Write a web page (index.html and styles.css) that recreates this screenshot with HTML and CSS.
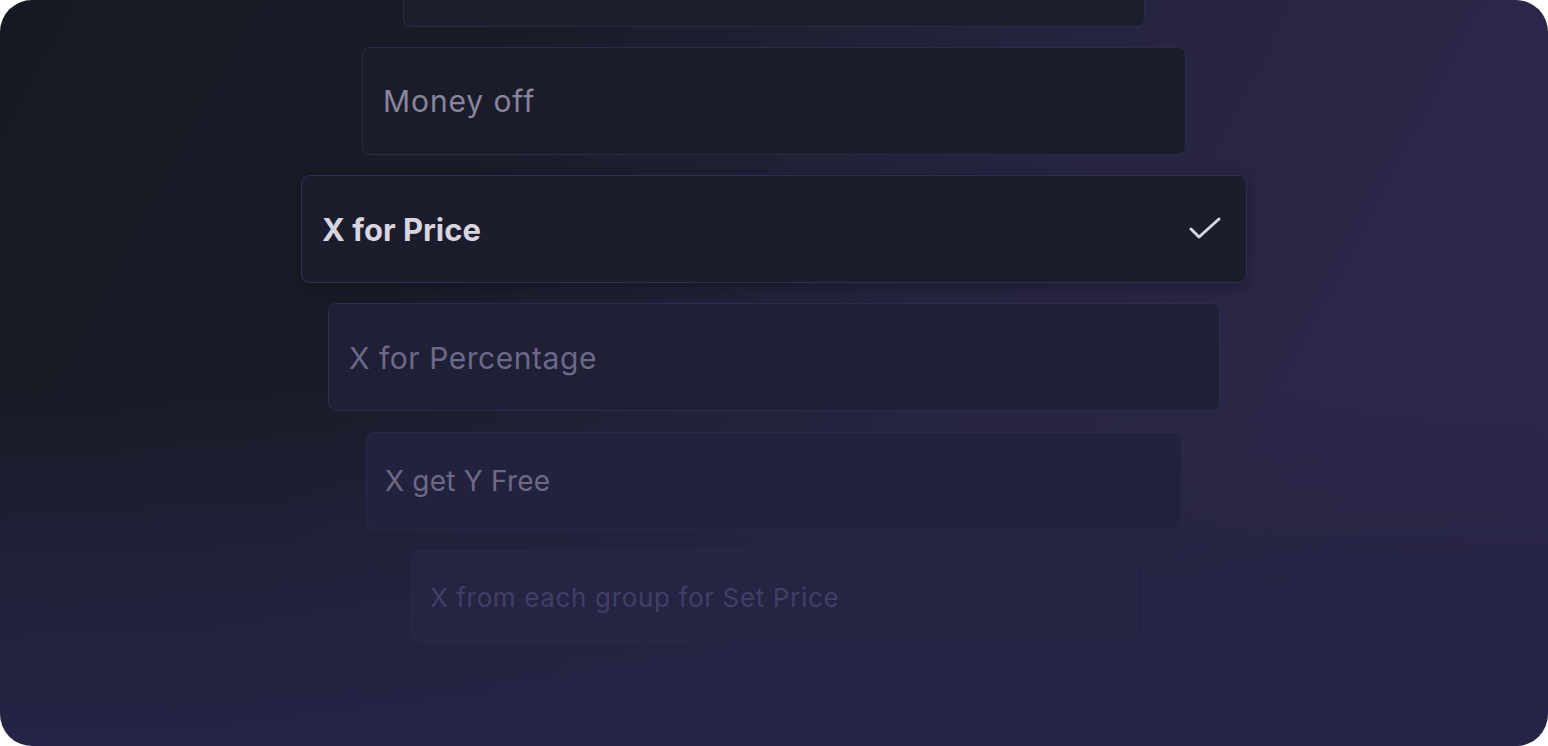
FILE: index.html
```html
<!DOCTYPE html>
<html lang="en">
<head>
<meta charset="utf-8">
<title>Promotion types</title>
<link rel="stylesheet" href="styles.css">
</head>
<body>
<main class="stage">
  <div class="list">
    <div class="option option--ghost-top"></div>
    <div class="option option--money"><span class="label">Money off</span></div>
    <div class="option option--selected">
      <span class="label">X for Price</span>
      <svg class="check" width="32" height="24" viewBox="0 0 32 24" aria-hidden="true">
        <path d="M2 12 L10 20 L30 2" fill="none" stroke="#d8d6e2" stroke-width="3" stroke-linecap="round" stroke-linejoin="round"/>
      </svg>
    </div>
    <div class="option option--percent"><span class="label">X for Percentage</span></div>
    <div class="option option--free"><span class="label">X get Y Free</span></div>
    <div class="option option--group"><span class="label">X from each group for Set Price</span></div>
  </div>
</main>
</body>
</html>
```

FILE: styles.css
```css
html, body {
  margin: 0;
  padding: 0;
  background: #ffffff;
}

.stage {
  width: 1548px;
  height: 746px;
  border-radius: 32px;
  overflow: hidden;
  background:
    linear-gradient(to bottom, rgba(37, 36, 70, 0) 52%, rgba(36, 35, 66, 0.75) 78%, rgba(37, 36, 70, 0.95) 100%),
    linear-gradient(118deg, #171922 0%, #1a1b28 28%, #25243f 55%, #2c2748 78%, #2d284b 100%);
  font-family: "Inter", "Open Sans", sans-serif;
}

.list {
  display: flex;
  flex-direction: column;
  align-items: center;
  gap: 20px;
  margin-top: -81px;
}

.option {
  box-sizing: border-box;
  display: flex;
  align-items: center;
  justify-content: space-between;
  border-radius: 8px;
  border: 1px solid #2b2a47;
  padding: 0 20px;
  height: 108px;
}

.label {
  line-height: 1;
  white-space: nowrap;
  letter-spacing: 0.5px;
}

.option--ghost-top {
  width: 742px;
  background: #1c1d2d;
  border-color: #2c2b4a;
}

.option--money {
  width: 824px;
  background: #1b1c2a;
  border-color: #2c2b4a;
}
.option--money .label {
  font-size: 30px;
  letter-spacing: 0.9px;
  color: #88859c;
}

.option--selected {
  width: 946px;
  background: #1b1c2c;
  border-color: #302e50;
  box-shadow: 0 4px 14px rgba(10, 10, 20, 0.35);
  padding-left: 20px;
  padding-right: 25px;
}
.option--selected .label {
  font-size: 31px;
  font-weight: 700;
  letter-spacing: 0;
  color: #d7d5df;
}
.check {
  display: block;
}

.option--percent {
  width: 892px;
  background: #1f1f36;
  border-color: #2d2c4e;
}
.option--percent .label {
  font-size: 30px;
  letter-spacing: 0.55px;
  padding-top: 2px;
  color: #6d6988;
}

.option--free {
  width: 816px;
  height: 98px;
  margin-top: 1px;
  padding-left: 18px;
  background: #22223e;
  border-color: #2a2949;
}
.option--free .label {
  font-size: 28px;
  letter-spacing: 0.2px;
  color: #6c6985;
}

.option--group {
  width: 726px;
  height: 92px;
  padding-left: 18px;
  background: #252443;
  border-color: #292849;
}
.option--group .label {
  font-size: 26px;
  letter-spacing: 0.65px;
  padding-top: 3px;
  color: #423f66;
}
```
